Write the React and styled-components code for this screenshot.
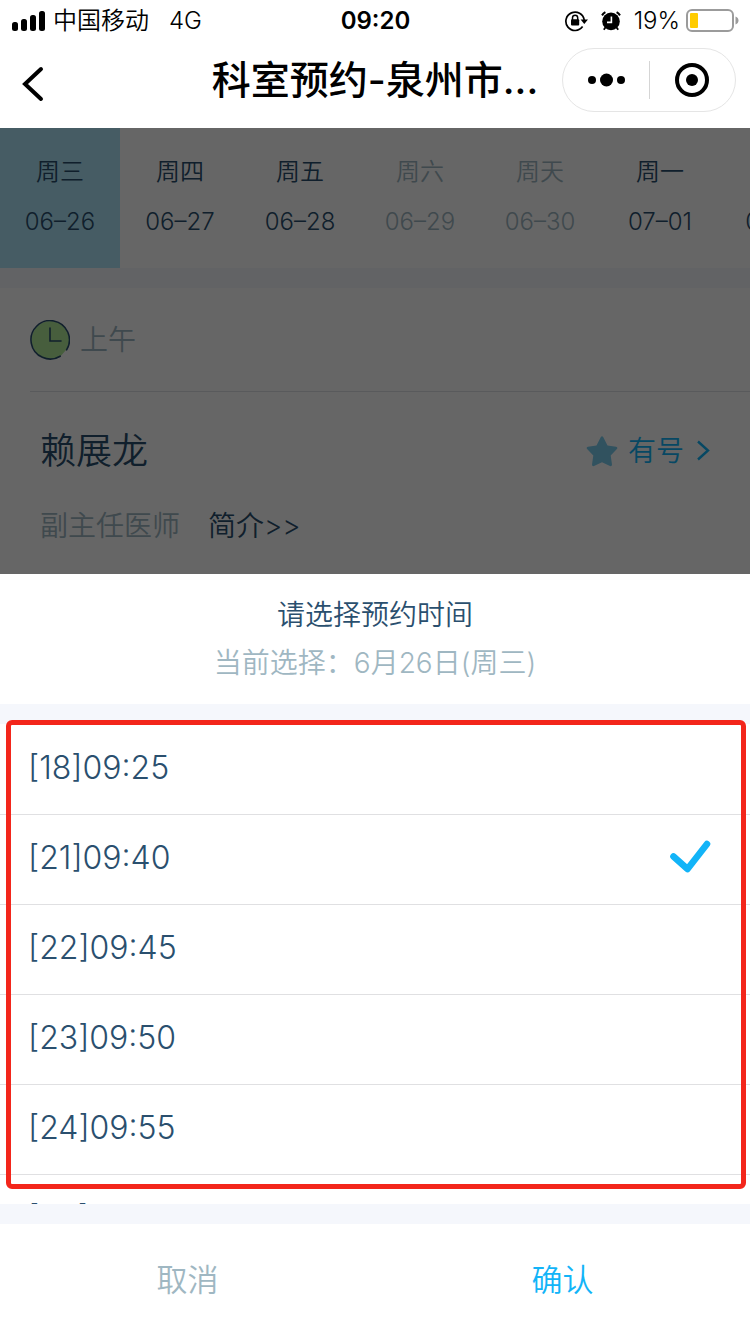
import React, { useState } from 'react'
import styled, { createGlobalStyle } from 'styled-components'

const GlobalStyle = createGlobalStyle`
    * {
        box-sizing: border-box;
    }
    body {
        margin: 0;
        background: #fff;
        font-family: Inter, "Noto Sans CJK SC", sans-serif;
        font-weight: 350;
        color: #2a4f6e;
    }
    button {
        padding: 0;
        border: 0;
        background: none;
        color: inherit;
        font: inherit;
        cursor: pointer;
    }
    a {
        color: inherit;
        text-decoration: none;
    }
    h1, h2, h3, p {
        margin: 0;
        font-size: inherit;
        font-weight: inherit;
    }
    svg {
        display: block;
        flex: none;
    }
`
const Screen = styled.div`
    display: flex;
    flex-direction: column;
    height: 100vh;
    overflow: hidden;
`
const StatusBar = styled.div`
    display: grid;
    grid-template-columns: 1fr auto 1fr;
    align-items: center;
    height: 42px;
    padding: 0 11px 0 12px;
    color: #000;
    font-size: 24px;
    line-height: 42px;
`
const StatusGroup = styled.div`
    display: flex;
    align-items: center;
    justify-content: ${(props) => (props.$end ? 'flex-end' : 'flex-start')};
    gap: ${(props) => (props.$end ? '13px' : '8px')};
`
const Network = styled.span`
    margin-left: 12px;
`
const Clock = styled.span`
    font-weight: 600;
`
const Battery = styled.div`
    display: flex;
    align-items: center;
    gap: 6px;
`
const NavBar = styled.header`
    display: grid;
    grid-template-columns: 188px 1fr 188px;
    align-items: center;
    height: 86px;
    padding-bottom: 10px;
    color: #000;
`
const Back = styled.button`
    justify-self: start;
    padding: 8px 20px 0;
`
const Title = styled.h1`
    text-align: center;
    font-size: 39px;
    line-height: 56px;
    font-weight: 500;
    white-space: nowrap;
`
const Capsule = styled.div`
    display: flex;
    align-items: center;
    justify-self: end;
    width: 174px;
    height: 64px;
    margin-right: 14px;
    border: 1px solid #e5e5e5;
    border-radius: 32px;
`
const CapsuleButton = styled.button`
    display: flex;
    flex: 1;
    align-items: center;
    justify-content: center;
`
const CapsuleLine = styled.span`
    width: 1px;
    height: 38px;
    background: #d5d5d5;
`
const View = styled.main`
    position: relative;
    flex: 1;
    min-height: 0;
    overflow: hidden;
`
const Days = styled.nav`
    display: flex;
    overflow: hidden;
`
const Day = styled.button`
    display: flex;
    flex: none;
    flex-direction: column;
    align-items: center;
    width: 120px;
    height: 140px;
    padding-top: 24px;
    gap: 10px;
    font-size: 24px;
    line-height: 40px;
    background: ${(props) => (props.$active ? '#afe6fa' : '#fff')};
    color: ${(props) => (props.$off ? '#9fb7c2' : 'inherit')};
`
const Band = styled.div`
    height: 20px;
    background: #f5f7fc;
`
const Period = styled.h2`
    display: flex;
    align-items: center;
    gap: 10px;
    height: 104px;
    margin-left: 30px;
    border-bottom: 1px solid #dfe2e5;
    color: #9fb7c2;
    font-size: 28px;
    line-height: 42px;
`
const Doctor = styled.section`
    display: flex;
    flex-direction: column;
    gap: 28px;
    padding: 33px 40px;
`
const DoctorRow = styled.div`
    display: flex;
    align-items: center;
    gap: 28px;
    font-size: 28px;
    line-height: 42px;
`
const DoctorName = styled.h3`
    flex: 1;
    font-size: 36px;
    line-height: 52px;
`
const Rank = styled.span`
    color: #9fb7c2;
`
const Available = styled.a`
    display: flex;
    align-items: center;
    gap: 10px;
    color: #12b4f8;
`
const Mask = styled.div`
    position: absolute;
    inset: 0;
    display: flex;
    flex-direction: column;
    justify-content: flex-end;
    background: rgba(0, 0, 0, 0.6);
`
const Sheet = styled.form`
    background: #fff;
`
const SheetHead = styled.div`
    display: flex;
    flex-direction: column;
    align-items: center;
    gap: 8px;
    padding: 21px 0;
    font-size: 28px;
    line-height: 40px;
`
const Current = styled.p`
    color: #9fb7c2;
`
const Picker = styled.div`
    position: relative;
`
const Slots = styled.div`
    height: 480px;
    overflow: hidden;
`
const Slot = styled.label`
    display: flex;
    align-items: center;
    justify-content: space-between;
    height: 90px;
    padding: 0 39px 4px 28px;
    border-top: 1px solid #e0e0e2;
    font-size: 32px;
    font-feature-settings: "case" 1;
    cursor: pointer;

    &:first-child {
        border-top-color: transparent;
    }
`
const SlotInput = styled.input`
    appearance: none;
    width: 0;
    height: 0;
    margin: 0;
`
const SlotText = styled.span`
    flex: 1;
`
// red frame drawn over the list and the band above it
const Highlight = styled.div`
    position: absolute;
    top: -4px;
    right: 4px;
    bottom: 15px;
    left: 6px;
    border: 5px solid #f3261b;
    border-radius: 6px;
    pointer-events: none;
`
const Actions = styled.div`
    display: grid;
    grid-template-columns: 1fr 1fr;
    height: 110px;
`
const Action = styled.button`
    padding-bottom: 4px;
    font-size: 31px;
    color: ${(props) => (props.$primary ? '#12b4f8' : '#9fb7c2')};
`

const days = [
    { name: '周三', date: '06–26', active: true },
    { name: '周四', date: '06–27' },
    { name: '周五', date: '06–28' },
    { name: '周六', date: '06–29', off: true },
    { name: '周天', date: '06–30', off: true },
    { name: '周一', date: '07–01' },
    { name: '周二', date: '07–02' },
]

const slots = [
    { id: 18, time: '09:25' },
    { id: 21, time: '09:40' },
    { id: 22, time: '09:45' },
    { id: 23, time: '09:50' },
    { id: 24, time: '09:55' },
    { id: 25, time: '10:00' },
]

const SignalIcon = () => (
    <svg width="33" height="20" viewBox="0 0 33 20">
        <rect x="0" y="11" width="6" height="9" rx="2.5" />
        <rect x="9" y="8" width="6" height="12" rx="2.5" />
        <rect x="18" y="4" width="6" height="16" rx="2.5" />
        <rect x="27" y="0" width="6" height="20" rx="2.5" />
    </svg>
)

const LockIcon = () => (
    <svg width="23" height="22" viewBox="0 0 23 22" fill="none" stroke="#000">
        <path d="M17.6 16.6A9.2 9.2 0 1 1 19.2 10" strokeWidth="1.7" />
        <path d="M15.6 9.6H23l-3.7 4.4z" fill="#000" stroke="none" />
        <path d="M7.5 10V7.8a2.6 2.6 0 0 1 5.2 0V10" strokeWidth="1.5" />
        <rect x="6" y="9.2" width="8.2" height="6.4" rx="1" fill="#000" stroke="none" />
    </svg>
)

const AlarmIcon = () => (
    <svg width="20" height="20" viewBox="0 0 20 20" fill="none" stroke="#000">
        <circle cx="10" cy="10.4" r="8.8" fill="#000" stroke="none" />
        <path d="M1 4.4A9 9 0 0 1 4.4 1.2M19 4.4A9 9 0 0 0 15.6 1.2" strokeWidth="2" />
        <path d="M4.4 16.4L2.8 18.8M15.6 16.4l1.6 2.4" strokeWidth="1.8" />
        <path d="M10.4 5.4v6H6" stroke="#fff" strokeWidth="1.6" />
    </svg>
)

const BatteryIcon = () => (
    <svg width="53" height="24" viewBox="0 0 53 24">
        <rect x="1" y="1" width="46" height="21" rx="5" fill="none" stroke="#9b9b9b" strokeWidth="2" />
        <rect x="4" y="4" width="8" height="15" rx="1" fill="#fc0" />
        <path d="M49.5 7.5q3 1.2 3 4t-3 4z" fill="#9b9b9b" />
    </svg>
)

const BackIcon = () => (
    <svg width="24" height="36" viewBox="0 0 24 36" fill="none" stroke="#000" strokeWidth="4" strokeLinecap="round">
        <path d="M21 3L5 18L21 33" />
    </svg>
)

const MoreIcon = () => (
    <svg width="38" height="14" viewBox="0 0 38 14">
        <circle cx="5" cy="7" r="4" />
        <circle cx="19.5" cy="7" r="6.5" />
        <circle cx="34" cy="7" r="4" />
    </svg>
)

const TargetIcon = () => (
    <svg width="34" height="34" viewBox="0 0 34 34">
        <circle cx="17" cy="17" r="15" fill="none" stroke="#000" strokeWidth="4" />
        <circle cx="17" cy="17" r="6" />
    </svg>
)

const MorningIcon = () => (
    <svg width="40" height="40" viewBox="0 0 40 40" fill="none" stroke="#2a4f6e" strokeWidth="1.6" strokeLinecap="round">
        <path d="M20 1a19 19 0 1 0 10.5 35.2L36.5 29.5A19 19 0 0 0 20 1z" fill="#b1ea9a" stroke="none" />
        <path d="M30.2 36.2A19.2 19.2 0 1 1 36.6 29.8" />
        <path d="M20 8v13h11" />
    </svg>
)

const StarIcon = () => (
    <svg width="32" height="32" viewBox="0 0 32 32" fill="#7ccdee">
        <path d="M14.7 2.2q1.3-2 2.6 0l4.2 8.2 8.6 1.4q2 .6.8 2.3l-6.2 6.5 1.3 9q0 2-2 1.5L16 27.2l-8 3.9q-2 .5-2-1.5l1.3-9L1.1 14.1q-1.2-1.7.8-2.3l8.6-1.4z" />
    </svg>
)

const ArrowIcon = () => (
    <svg width="16" height="22" viewBox="0 0 16 22" fill="none" stroke="#12b4f8" strokeWidth="2.4">
        <path d="M4 1.5L14 10.5L4 19.5" />
    </svg>
)

const CheckIcon = () => (
    <svg width="42" height="36" viewBox="0 0 42 36" fill="none" stroke="#12b4f8" strokeWidth="6.6" strokeLinecap="round" strokeLinejoin="round">
        <path d="M4.5 16.5L18.5 29L38 4" />
    </svg>
)

function App() {
    const [picked, setPicked] = useState(21)

    return (
        <Screen>
            <GlobalStyle />
            <StatusBar>
                <StatusGroup>
                    <SignalIcon />
                    <span>中国移动</span>
                    <Network>4G</Network>
                </StatusGroup>
                <Clock>09:20</Clock>
                <StatusGroup $end>
                    <LockIcon />
                    <AlarmIcon />
                    <Battery>
                        <span>19%</span>
                        <BatteryIcon />
                    </Battery>
                </StatusGroup>
            </StatusBar>
            <NavBar>
                <Back aria-label="返回"><BackIcon /></Back>
                <Title>科室预约-泉州市...</Title>
                <Capsule>
                    <CapsuleButton aria-label="更多"><MoreIcon /></CapsuleButton>
                    <CapsuleLine />
                    <CapsuleButton aria-label="关闭"><TargetIcon /></CapsuleButton>
                </Capsule>
            </NavBar>
            <View>
                <Days>
                    {days.map((day) => (
                        <Day key={day.date} $active={day.active} $off={day.off}>
                            <span>{day.name}</span>
                            <span>{day.date}</span>
                        </Day>
                    ))}
                </Days>
                <Band />
                <Period><MorningIcon />上午</Period>
                <Doctor>
                    <DoctorRow>
                        <DoctorName>赖展龙</DoctorName>
                        <Available href="#book"><StarIcon />有号<ArrowIcon /></Available>
                    </DoctorRow>
                    <DoctorRow>
                        <Rank>副主任医师</Rank>
                        <a href="#intro">简介&gt;&gt;</a>
                    </DoctorRow>
                </Doctor>
                <Mask>
                    <Sheet onSubmit={(e) => e.preventDefault()}>
                        <SheetHead>
                            <h2>请选择预约时间</h2>
                            <Current>当前选择：6月26日(周三)</Current>
                        </SheetHead>
                        <Band />
                        <Picker>
                            <Slots role="radiogroup" aria-label="预约时间">
                                {slots.map((slot) => (
                                    <Slot key={slot.id}>
                                        <SlotInput
                                            type="radio"
                                            name="slot"
                                            checked={picked === slot.id}
                                            onChange={() => setPicked(slot.id)}
                                        />
                                        <SlotText>[{slot.id}]{slot.time}</SlotText>
                                        {picked === slot.id && <CheckIcon />}
                                    </Slot>
                                ))}
                            </Slots>
                            <Highlight />
                        </Picker>
                        <Band />
                        <Actions>
                            <Action type="button">取消</Action>
                            <Action type="submit" $primary>确认</Action>
                        </Actions>
                    </Sheet>
                </Mask>
            </View>
        </Screen>
    )
}

export default App
